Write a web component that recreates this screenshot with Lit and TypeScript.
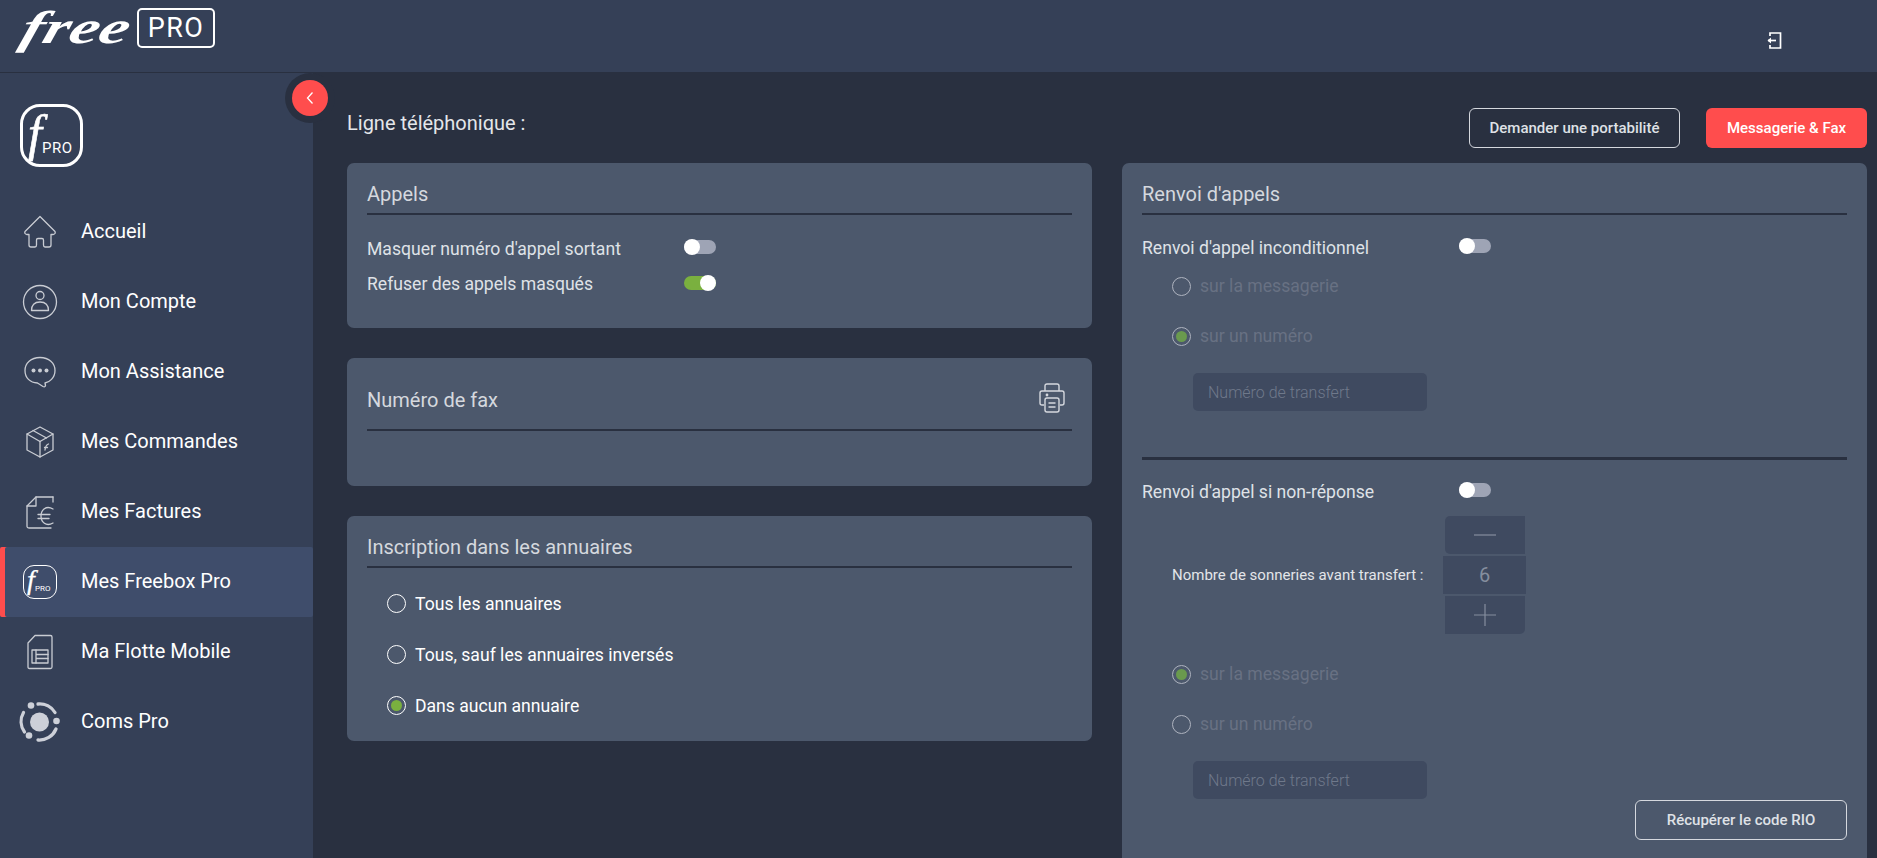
import { LitElement, html, css, svg } from 'lit';
import { customElement } from 'lit/decorators.js';

const stroke = (body: unknown, box = '0 0 36 36') => html`<svg
    width="36"
    height="36"
    viewBox=${box}
    fill="none"
    stroke="#c9ccd3"
    stroke-width="1.3"
    stroke-linejoin="round"
    stroke-linecap="round"
>
    ${body}
</svg>`;

const icons = {
    home: stroke(svg`<path d="M18 2.500 L33 17.500 Q34 20 31 20.500 H29 V31 Q29 33 27 33 H23 Q21.500 33 21.500 31 V26 Q21.500 24.500 20 24.500 H16 Q14.500 24.500 14.500 26 V31 Q14.500 33 13 33 H9 Q7 33 7 31 V20.500 H5 Q2 20 3 17.500 Z"/>`),
    user: stroke(svg`<circle cx="18" cy="18" r="16.500"/><circle cx="18" cy="11.500" r="4"/><path d="M9.500 26.500 Q9.500 18 18 18 Q26.500 18 26.500 26.500 Z" />`),
    chat: stroke(svg`<path d="M18 3.500 C27 3.500 33 9 33 16.500 C33 24 27 28.500 23 29 L23.500 31.500 Q23 33.500 21 32.500 L15.500 29 C8 28.500 3 24 3 16.500 C3 9 9 3.500 18 3.500 Z"/><circle cx="11.500" cy="16.500" r="2" fill="#c9ccd3" stroke="none"/><circle cx="18" cy="16.500" r="2" fill="#c9ccd3" stroke="none"/><circle cx="24.500" cy="16.500" r="2" fill="#c9ccd3" stroke="none"/>`),
    box: stroke(svg`<path d="M18 3 L31 10 V26 L18 33 L5 26 V10 Z"/><path d="M5 10 L18 17.500 L31 10"/><path d="M18 17.500 V33"/><path d="M11 6.500 L24.500 14"/><path d="M23 26 Q23.500 21 26.500 20 M22.500 23.500 H25.500"/>`),
    bill: stroke(svg`<path d="M31 3 H14 L5 12 V32.500 Q5 34 7 34 H29"/><path d="M14 3 V12 H5"/><path d="M31 3 V8"/><path d="M31 15 C24 11 19 16 19 22 C19 28 24 33 31 29"/><path d="M16 20.500 H28 M16 24.500 H27"/>`),
    sim: stroke(svg`<path d="M13 1.500 H28.500 Q30 1.500 30 3 V33 Q30 34.500 28.500 34.500 H7.500 Q6 34.500 6 33 V9 Z"/><rect x="10" y="16" width="16" height="13"/><path d="M14 16 V29 M14 20.500 H26 M14 24.500 H26"/>`),
};

const freeboxIcon = html`<span class="mini-logo"><i>f</i><b>PRO</b></span>`;

const comsIcon = html`<svg width="42" height="42" viewBox="0 0 42 42" fill="none">
    <circle cx="20.500" cy="21" r="9.500" fill="#cdd0d8" />
    <g stroke="#cdd0d8" stroke-width="3.300" stroke-linecap="round" fill="none">
        <path d="M19 3 A18 18 0 0 1 36 11.500" />
        <path d="M37 28 A18 18 0 0 1 19 39" />
        <path d="M5.500 31 A18 18 0 0 1 4.500 11.500" />
    </g>
    <circle cx="12" cy="4.500" r="3.300" fill="#cdd0d8" />
    <circle cx="37.500" cy="20" r="3.300" fill="#cdd0d8" />
    <circle cx="10" cy="34.500" r="3.300" fill="#cdd0d8" />
</svg>`;

const navItems = [
    { label: 'Accueil', icon: icons.home },
    { label: 'Mon Compte', icon: icons.user },
    { label: 'Mon Assistance', icon: icons.chat },
    { label: 'Mes Commandes', icon: icons.box },
    { label: 'Mes Factures', icon: icons.bill },
    { label: 'Mes Freebox Pro', icon: freeboxIcon, active: true },
    { label: 'Ma Flotte Mobile', icon: icons.sim },
    { label: 'Coms Pro', icon: comsIcon },
];

@customElement('app-root')
export class AppRoot extends LitElement {
    static styles = css`
        * {
            box-sizing: border-box;
        }

        :host {
            display: block;
            height: 858px;
            overflow: hidden;
            background: #293040;
            color: #fff;
            font-family: Roboto, 'Liberation Sans', sans-serif;
        }

        .topbar {
            height: 73px;
            background: #354057;
            border-bottom: 1px solid #293040;
            display: flex;
            align-items: flex-start;
            padding: 8px 0 0 15px;
        }

        .wordmark {
            display: block;
            width: 122px;
            padding-top: 2px;
            font: italic 700 46px/36px 'Liberation Serif', serif;
            color: #fff;
            transform-origin: 0 50%;
            transform: translateX(8px) scaleX(1.450) skewX(-12deg);
        }

        .pro-box {
            width: 78px;
            height: 40px;
            border: 2px solid #fff;
            border-radius: 5px;
            font-size: 27px;
            line-height: 37px;
            text-align: center;
            letter-spacing: 1.500px;
        }

        .logout {
            margin: 24px 95px 0 auto;
        }

        .shell {
            display: flex;
            height: 785px;
        }

        .sidebar {
            position: relative;
            width: 313px;
            flex: none;
            background: #354057;
        }

        .collapse {
            position: absolute;
            top: 0;
            right: -22px;
            width: 50px;
            height: 50px;
            border-radius: 50%;
            background: #293040;
            display: flex;
            align-items: center;
            justify-content: center;
        }

        .collapse span {
            width: 36px;
            height: 36px;
            border-radius: 50%;
            background: #ff4d4d;
            display: flex;
            align-items: center;
            justify-content: center;
        }

        .brand {
            width: 63px;
            height: 63px;
            margin: 31px 0 30px 20px;
            border: 3px solid #fff;
            border-radius: 20px;
            position: relative;
        }

        .brand i {
            position: absolute;
            left: 5px;
            top: 1px;
            font: italic 400 50px/50px 'Liberation Serif', serif;
            -webkit-text-stroke: 0.600px #fff;
        }

        .brand b {
            position: absolute;
            left: 19px;
            top: 33px;
            font-size: 15px;
            font-weight: 400;
            line-height: 16px;
            letter-spacing: 0.500px;
        }

        .mini-logo {
            position: relative;
            display: block;
            width: 34px;
            height: 34px;
            border: 1.500px solid #fff;
            border-radius: 11px;
        }

        .mini-logo i {
            position: absolute;
            left: 3px;
            top: 0;
            font: italic 400 28px/28px 'Liberation Serif', serif;
            -webkit-text-stroke: 0.300px #fff;
        }

        .mini-logo b {
            position: absolute;
            left: 11px;
            top: 18px;
            font-size: 8px;
            font-weight: 400;
            line-height: 9px;
        }

        .nav-item {
            height: 70px;
            display: flex;
            align-items: center;
            font-size: 20px;
            color: #fff;
            border-radius: 2px;
        }

        .nav-item > span:last-child {
            margin-bottom: 3px;
        }

        .nav-item.active {
            background: #3f4d6b;
            box-shadow: inset 5px 0 0 #ff4d4d;
        }

        .nav-icon {
            width: 81px;
            flex: none;
            display: flex;
            justify-content: center;
            padding-right: 1px;
        }

        .content {
            flex: 1;
            display: grid;
            grid-template-columns: 745px 745px;
            column-gap: 30px;
            grid-template-rows: 90px 1fr;
            padding: 0 10px 0 34px;
        }

        .page-title {
            padding-top: 38px;
            font-size: 20px;
            line-height: 24px;
            color: #e4e6ea;
        }

        .actions {
            display: flex;
            justify-content: flex-end;
            gap: 26px;
            padding-top: 35px;
        }

        .btn {
            height: 40px;
            padding: 0;
            display: flex;
            align-items: center;
            justify-content: center;
            border-radius: 6px;
            font-size: 15px;
            font-weight: 500;
        }

        .btn.ghost {
            width: 211px;
            border: 1px solid #d5d8de;
            color: #dfe1e6;
        }

        .btn.red {
            width: 161px;
            background: #ff4d4d;
            color: #fff;
        }

        .stack {
            display: flex;
            flex-direction: column;
            gap: 30px;
        }

        .card {
            background: #4c586c;
            border-radius: 7px;
            padding: 0 20px;
        }

        .card-title {
            display: flex;
            justify-content: space-between;
            align-items: center;
            padding: 19px 0 7px;
            border-bottom: 2px solid #293040;
            font-size: 20px;
            line-height: 24px;
            color: #d5d8de;
        }

        .card-title.tall {
            padding: 30px 0 17px;
        }

        .printer {
            margin: -5px 7px -1px 0;
            height: 30px;
        }

        .switch-row {
            height: 35px;
            display: flex;
            align-items: center;
            font-size: 17.600px;
            color: #dfe2e7;
        }

        .switch-row > span:first-child {
            width: 317px;
            flex: none;
        }

        .toggle {
            position: relative;
            width: 32px;
            height: 14px;
            margin-bottom: 4px;
            border-radius: 7px;
            background: #9ea4b5;
        }

        .toggle::after {
            content: '';
            position: absolute;
            left: 0;
            top: -1px;
            width: 16px;
            height: 16px;
            border-radius: 50%;
            background: #fff;
        }

        .toggle.on {
            margin-bottom: 2px;
            background: #7ab03f;
        }

        .toggle.on::after {
            left: 16px;
        }

        .card-one {
            height: 165px;
        }

        .switches {
            padding-top: 16px;
        }

        .card-fax {
            height: 128px;
        }

        .radios {
            padding: 10px 0 10px 20px;
        }

        .radio {
            height: 51px;
            display: flex;
            align-items: center;
            gap: 9px;
            font-size: 17.600px;
            color: #fff;
        }

        .dot {
            width: 19px;
            height: 19px;
            flex: none;
            border: 1px solid #fff;
            border-radius: 50%;
            display: flex;
            align-items: center;
            justify-content: center;
        }

        .dot.on::after {
            content: '';
            width: 11px;
            height: 11px;
            border-radius: 50%;
            background: #7ab03f;
        }

        .forward {
            height: 800px;
        }

        .fwd-row {
            height: 30px;
        }

        .first {
            margin-top: 18px;
        }

        .fwd-options {
            padding-left: 30px;
        }

        .fwd-options .radio {
            height: 46px;
            margin-bottom: 4px;
            color: #687183;
        }

        .fwd-options .dot {
            border-color: #aeb3bf;
        }

        .fwd-options .dot.on::after {
            background: #6a9a4e;
        }

        .field {
            width: 234px;
            height: 38px;
            margin: 14px 0 0 51px;
            padding-left: 15px;
            display: flex;
            align-items: center;
            border-radius: 5px;
            background: #3f4a60;
            color: #6f798b;
            font-size: 16px;
            font-weight: 300;
        }

        .split {
            height: 3px;
            margin: 46px 0 17px;
            background: #293040;
        }

        .stepper-row {
            display: flex;
            align-items: center;
            margin: 9px 0 17px 30px;
        }

        .stepper-row > span {
            width: 271px;
            flex: none;
            font-size: 15px;
            color: #e3e5e9;
        }

        .stepper {
            display: flex;
            flex-direction: column;
            align-items: center;
            gap: 2px;
        }

        .stepper div {
            width: 80px;
            height: 38px;
            background: #3f4a60;
            display: flex;
            align-items: center;
            justify-content: center;
            color: #858e9e;
            font-size: 20px;
        }

        .stepper .minus {
            border-radius: 5px 0 0 5px;
        }

        .stepper .value {
            width: 83px;
        }

        .stepper .plus {
            border-radius: 0 0 5px 0;
        }

        .rio {
            display: flex;
            justify-content: flex-end;
            margin-top: 1px;
        }

        .rio .btn {
            width: 212px;
        }
    `;

    private radio(label: string, on = false) {
        return html`<div class="radio">
            <span class="dot ${on ? 'on' : ''}"></span><span>${label}</span>
        </div>`;
    }

    render() {
        return html`
            <header class="topbar">
                <span class="wordmark">free</span>
                <span class="pro-box">PRO</span>
                <svg class="logout" width="16" height="18" viewBox="0 0 16 18" fill="none" stroke="#fff" stroke-width="1.700">
                    <path d="M4 4 V1 H14.500 V16 H4 V13" />
                    <path d="M2 8.500 H10" />
                    <path d="M5 5.500 L1.500 8.500 L5 11.500" fill="#fff" stroke="none" />
                </svg>
            </header>
            <div class="shell">
                <nav class="sidebar">
                    <div class="collapse">
                        <span>
                            <svg width="10" height="14" viewBox="0 0 10 14" fill="none" stroke="#fff" stroke-width="1.300">
                                <path d="M7.500 1.500 L2.500 7 L7.500 12.500" />
                            </svg>
                        </span>
                    </div>
                    <div class="brand"><i>f</i><b>PRO</b></div>
                    ${navItems.map(
                        (item) => html`<div class="nav-item ${item.active ? 'active' : ''}">
                            <span class="nav-icon">${item.icon}</span>
                            <span>${item.label}</span>
                        </div>`
                    )}
                </nav>
                <main class="content">
                    <div class="page-title">Ligne téléphonique :</div>
                    <div class="actions">
                        <div class="btn ghost">Demander une portabilité</div>
                        <div class="btn red">Messagerie &amp; Fax</div>
                    </div>
                    <div class="stack">
                        <section class="card card-one">
                            <div class="card-title">Appels</div>
                            <div class="switches">
                                <div class="switch-row">
                                    <span>Masquer numéro d'appel sortant</span><span class="toggle"></span>
                                </div>
                                <div class="switch-row">
                                    <span>Refuser des appels masqués</span><span class="toggle on"></span>
                                </div>
                            </div>
                        </section>
                        <section class="card card-fax">
                            <div class="card-title tall">
                                <span>Numéro de fax</span>
                                <svg class="printer" width="26" height="30" viewBox="0 0 26 30" fill="none" stroke="#d5d8de" stroke-width="1.400">
                                    <path d="M6 8 V3 Q6 1 8 1 H18 Q20 1 20 3 V8" />
                                    <path d="M5 22 H3 Q1 22 1 20 V10 Q1 8 3 8 H23 Q25 8 25 10 V20 Q25 22 23 22 H21" />
                                    <rect x="6" y="15" width="14" height="14" rx="2" />
                                    <path d="M9.500 20 H16.500 M9.500 24 H16.500" />
                                    <circle cx="8" cy="12" r="0.700" fill="#d5d8de" />
                                </svg>
                            </div>
                        </section>
                        <section class="card">
                            <div class="card-title">Inscription dans les annuaires</div>
                            <div class="radios">
                                ${this.radio('Tous les annuaires')}
                                ${this.radio('Tous, sauf les annuaires inversés')}
                                ${this.radio('Dans aucun annuaire', true)}
                            </div>
                        </section>
                    </div>
                    <section class="card forward">
                        <div class="card-title">Renvoi d'appels</div>
                        <div class="switch-row fwd-row first">
                            <span>Renvoi d'appel inconditionnel</span><span class="toggle"></span>
                        </div>
                        <div class="fwd-options">
                            ${this.radio('sur la messagerie')} ${this.radio('sur un numéro', true)}
                        </div>
                        <div class="field">Numéro de transfert</div>
                        <div class="split"></div>
                        <div class="switch-row fwd-row">
                            <span>Renvoi d'appel si non-réponse</span><span class="toggle"></span>
                        </div>
                        <div class="stepper-row">
                            <span>Nombre de sonneries avant transfert :</span>
                            <div class="stepper">
                                <div class="minus">
                                    <svg width="24" height="24" viewBox="0 0 24 24" stroke="#858e9e" stroke-width="1.200"><path d="M1 12 H23" /></svg>
                                </div>
                                <div class="value">6</div>
                                <div class="plus">
                                    <svg width="24" height="24" viewBox="0 0 24 24" stroke="#858e9e" stroke-width="1.200"><path d="M1 12 H23 M12 1 V23" /></svg>
                                </div>
                            </div>
                        </div>
                        <div class="fwd-options">
                            ${this.radio('sur la messagerie', true)} ${this.radio('sur un numéro')}
                        </div>
                        <div class="field">Numéro de transfert</div>
                        <div class="rio"><div class="btn ghost">Récupérer le code RIO</div></div>
                    </section>
                </main>
            </div>
        `;
    }
}
